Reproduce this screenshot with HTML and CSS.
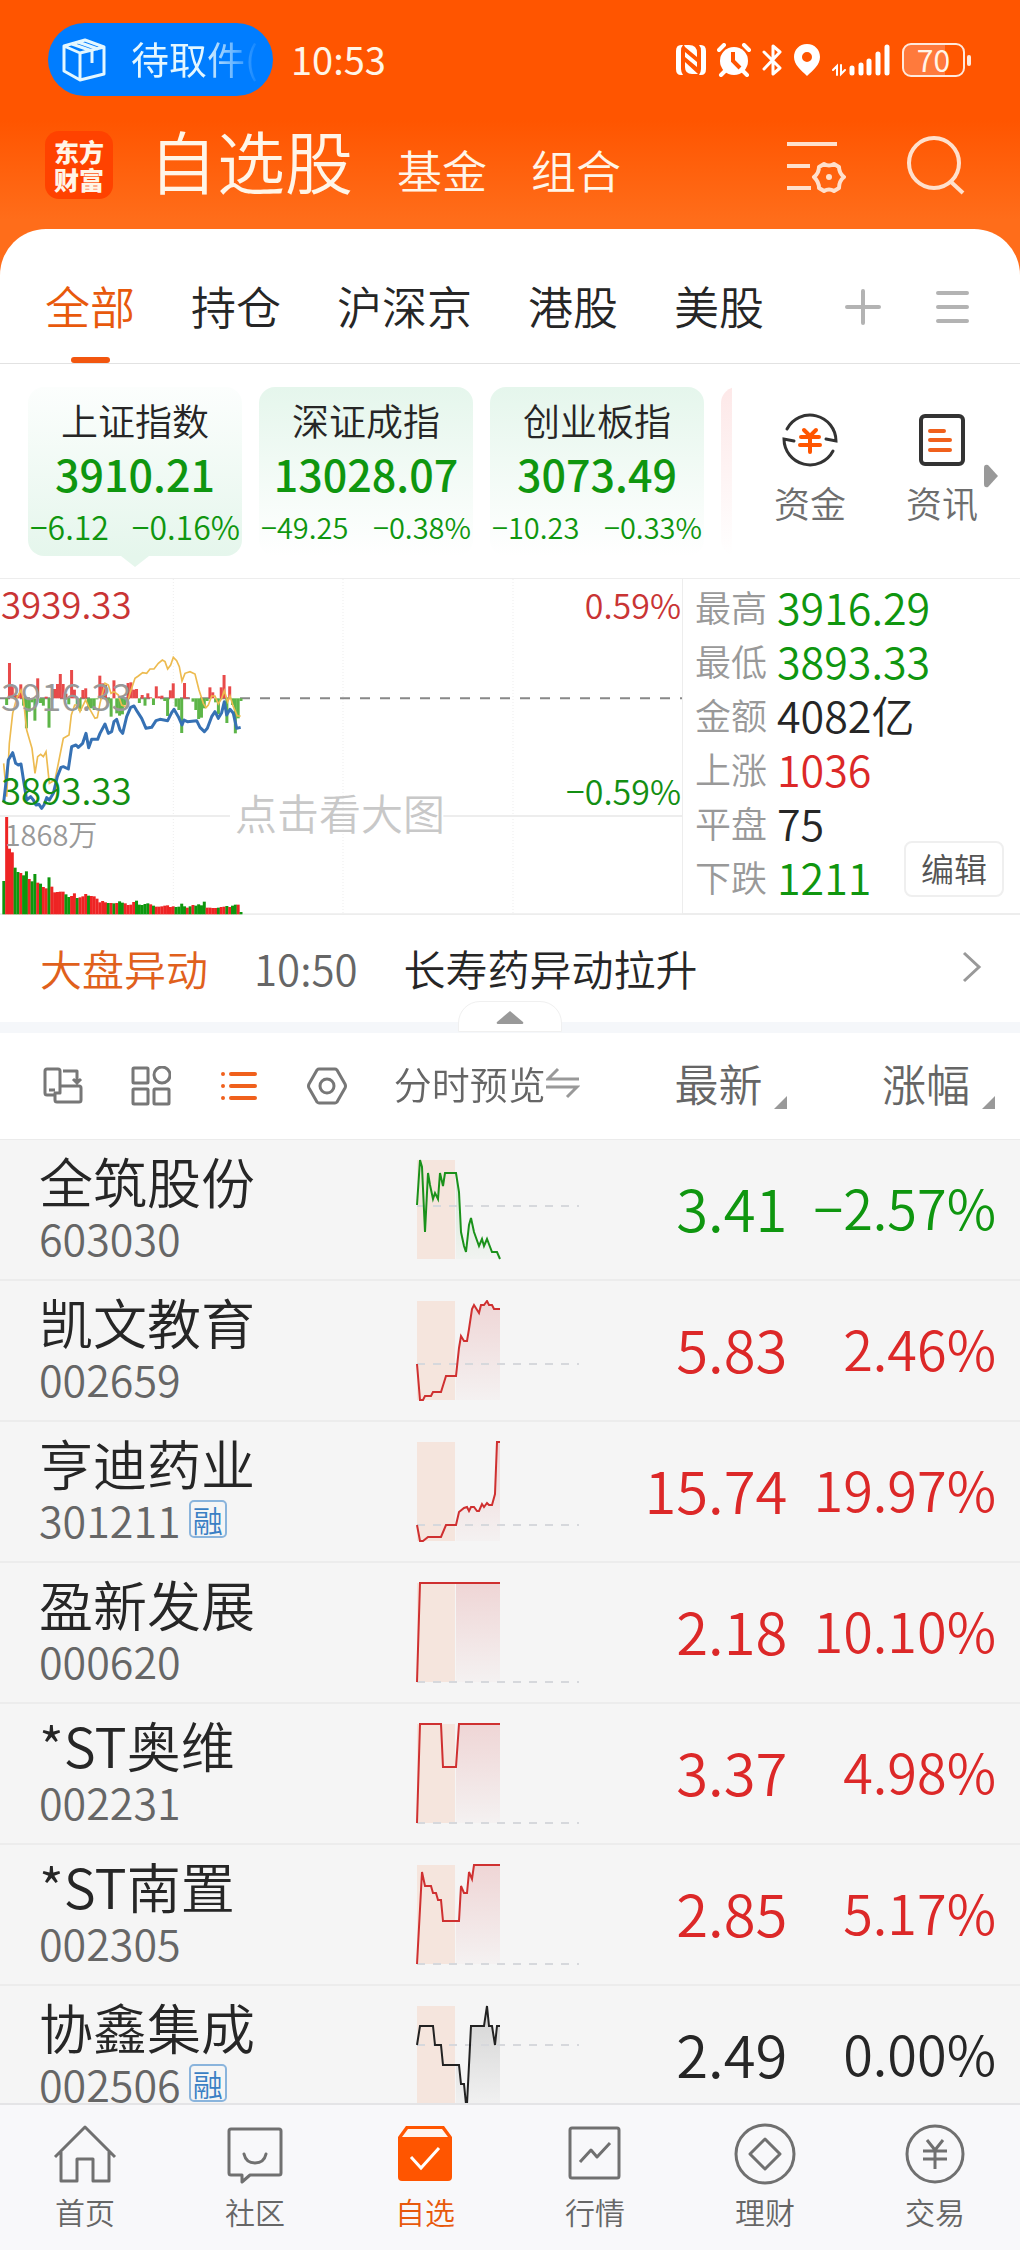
FILE: index.html
```html
<!DOCTYPE html>
<html lang="zh-CN">
<head>
  <meta charset="UTF-8" />
  <meta name="viewport" content="width=device-width, initial-scale=1" />
  <title>自选股</title>
  <link rel="stylesheet" href="styles.css">
</head>
<body>

  <header class="top">
    <div class="status-bar">
      <button class="pill">
        <svg width="44" height="44" viewBox="0 0 44 44" fill="none" stroke="#e4f7ff" stroke-width="3" stroke-linejoin="round">
          <path d="M2 8 L23 2 L42 9 V36 L18 42 L2 33 Z M2 8 L18 15 L42 9 M18 15 V42" />
          <path d="M10 6 L30 13 V25 M16 4 L36 11" />
        </svg>
        <span class="pill-text">待取件(</span>
      </button>
      <span class="clock">10:53</span>
      <div class="status-icons">
        <svg width="30" height="32" viewBox="0 0 30 32" fill="#fff">
          <path d="M7 1 H5 Q0 1 0 7 V25 Q0 31 5 31 H7 Q5 28 5 25 V7 Q5 3 7 1 Z M23 1 H25 Q30 1 30 7 V25 Q30 31 25 31 H23 Q25 28 25 25 V7 Q25 3 23 1 Z" />
          <path d="M8 1 H13 Q21 1 21 9 V13 L9 3 Z M9 8 L21 18 V23 L9 13 Z M9 18 L22 30 H16 Q9 30 9 23 Z" />
        </svg>
        <svg width="34" height="34" viewBox="0 0 34 34">
          <path d="M2 7 L7 2 M32 7 L27 2 M8 28 L4 32 M26 28 L30 32" stroke="#fff" stroke-width="4" stroke-linecap="round" />
          <circle cx="17" cy="18" r="14" fill="#fff" />
          <path d="M16 9 V18 L23 25" fill="none" stroke="#ff5500" stroke-width="4" />
        </svg>
        <svg width="20" height="34" viewBox="0 0 20 34" fill="none" stroke="#fff" stroke-width="3" stroke-linecap="round" stroke-linejoin="round">
          <path d="M2 9 L18 25 L11 31 V3 L18 9 L2 26" />
        </svg>
        <svg width="28" height="34" viewBox="0 0 28 34" fill="#fff" fill-rule="evenodd">
          <path d="M14 1 C22 1 27 7 27 14 C27 22 20 27 14 33 C8 27 1 22 1 14 C1 7 6 1 14 1 Z M14 9 A5 5 0 1 0 14 19 A5 5 0 1 0 14 9 Z" />
        </svg>
        <svg class="signal" width="59" height="34" viewBox="0 0 59 34" fill="none" stroke="#fff" stroke-width="5" stroke-linecap="round">
          <path d="M20 25 V30 M29 22 V30 M37 18 V30 M46 11 V30 M55 4 V30" />
          <path d="M1 27 L5 23 V32 M9 22 V31 L13 27" stroke-width="2" />
        </svg>
        <span class="battery"><span>70</span></span>
      </div>
    </div>
    <div class="title-bar">
      <a class="logo" href="#"><span>东方</span><span>财富</span></a>
      <nav class="sections">
        <h1><a href="#">自选股</a></h1>
        <a href="#">基金</a>
        <a href="#">组合</a>
      </nav>
      <button class="icon-btn" aria-label="筛选设置">
        <svg width="60" height="60" viewBox="0 0 60 60" fill="none" stroke="#ffe0cc" stroke-width="4">
          <path d="M1 9 H51 M1 31 H24 M1 53 H25" />
          <path d="M38 29 Q43 32 48 29 L53 32 Q53 38 58 42 Q53 46 53 53 L48 56 Q43 53 38 56 L33 53 Q33 47 28 42 Q33 38 33 32 Z" stroke-linejoin="round" />
          <circle cx="43" cy="42" r="3" fill="#ffe0cc" stroke="none" />
        </svg>
      </button>
      <button class="icon-btn" aria-label="搜索">
        <svg width="60" height="60" viewBox="0 0 60 60" fill="none" stroke="#ffe0cc" stroke-width="4">
          <circle cx="28" cy="28" r="25" /><path d="M44 46 L57 58" />
        </svg>
      </button>
    </div>
  </header>

  <main class="panel">
    <nav class="tabs">
      <a class="active" href="#">全部</a>
      <a href="#">持仓</a>
      <a href="#">沪深京</a>
      <a href="#">港股</a>
      <a href="#">美股</a>
      <div class="tab-tools">
        <button aria-label="添加"><svg width="36" height="36" viewBox="0 0 36 36" stroke="#b3b3b3" stroke-width="4" stroke-linecap="round"><path d="M2 18 H34 M18 2 V34" /></svg></button>
        <button aria-label="分组管理"><svg width="34" height="36" viewBox="0 0 34 36" stroke="#b3b3b3" stroke-width="4" stroke-linecap="round"><path d="M2 4 H31 M2 18 H31 M2 32 H31" /></svg></button>
      </div>
    </nav>

    <section class="indexes">
      <div class="cards">
        <a class="card selected" href="#">
          <span class="card-name">上证指数</span>
          <strong>3910.21</strong>
          <span class="card-change"><span>−6.12</span><span>−0.16%</span></span>
        </a>
        <a class="card" href="#">
          <span class="card-name">深证成指</span>
          <strong>13028.07</strong>
          <span class="card-change"><span>−49.25</span><span>−0.38%</span></span>
        </a>
        <a class="card" href="#">
          <span class="card-name">创业板指</span>
          <strong>3073.49</strong>
          <span class="card-change"><span>−10.23</span><span>−0.33%</span></span>
        </a>
        <span class="card rise"></span>
      </div>
      <div class="shortcuts">
        <a href="#">
          <svg width="58" height="58" viewBox="0 0 58 58" fill="none" stroke="#333" stroke-width="3" stroke-linecap="round">
            <path d="M6 18 A26 26 0 0 1 55 30 L45 28 M52 40 A26 26 0 0 1 3 28 L13 30" />
            <path d="M23 19 L29 25 L35 19 M20 26 H38 M19 34 H39 M29 26 V41" stroke="#ff5500" stroke-width="4" />
          </svg>
          <span>资金</span>
        </a>
        <a href="#">
          <svg width="58" height="58" viewBox="0 0 58 58" fill="none" stroke="#333" stroke-width="4" stroke-linecap="round">
            <rect x="8" y="5" width="42" height="48" rx="4" />
            <path d="M17 20 H31 M17 29 H37 M17 39 H37" stroke="#f0601c" />
          </svg>
          <span>资讯</span>
        </a>
        <svg class="more" width="14" height="24" viewBox="0 0 14 24" fill="#999"><path d="M0 4 Q0 0 4 1 L14 12 L4 23 Q0 24 0 20 Z" /></svg>
      </div>
    </section>

    <section class="market">
      <svg id="marketChart" class="market-chart" viewBox="0 0 2046 1008" role="img" aria-label="上证指数分时图">
        <g fill="none" stroke="#ededed" stroke-width="6">
          <path d="M0 711 H690 M1330 711 H2046 M0 1006 H2046" />
          <path d="M520 0 V1008 M1029 0 V1008 M1539 0 V1008" stroke-width="3" stroke-dasharray="3 6" />
        </g>
        <path d="M0 358 H2046" stroke="#888" stroke-width="6" stroke-dasharray="30 30" />
        <g id="flowBars"></g>
        <g id="volumeBars"></g>
        <polyline id="avgLine" fill="none" stroke="#edbb50" stroke-width="5" />
        <polyline id="priceLine" fill="none" stroke="#3671b4" stroke-width="9" stroke-linejoin="round" />
        <g class="chart-text">
          <text x="3" y="121" fill="#c93434">3939.33</text>
          <text x="3" y="397" fill="#999">3916.33</text>
          <text x="3" y="678" fill="#138f13">3893.33</text>
          <text class="percent-text" x="2043" y="121" fill="#c93434" text-anchor="end">0.59%</text>
          <text class="percent-text" x="2043" y="678" fill="#138f13" text-anchor="end">−0.59%</text>
          <text class="volume-text" x="14" y="801" fill="#999">1868万</text>
          <text class="hint-text" x="1020" y="754" fill="#c8c8c8" text-anchor="middle">点击看大图</text>
        </g>
      </svg>
      <div class="market-side">
        <dl>
          <div><dt>最高</dt><dd class="down">3916.29</dd></div>
          <div><dt>最低</dt><dd class="down">3893.33</dd></div>
          <div><dt>金额</dt><dd>4082亿</dd></div>
          <div><dt>上涨</dt><dd class="up">1036</dd></div>
          <div><dt>平盘</dt><dd>75</dd></div>
          <div><dt>下跌</dt><dd class="down">1211</dd></div>
        </dl>
        <button class="edit-btn">编辑</button>
      </div>
    </section>

    <section class="news">
      <a href="#">
        <span class="news-tag">大盘异动</span>
        <time>10:50</time>
        <span class="news-title">长寿药异动拉升</span>
        <svg width="20" height="32" viewBox="0 0 20 32" fill="none" stroke="#999" stroke-width="3"><path d="M2 2 L17 16 L2 30" /></svg>
      </a>
      <button class="collapse" aria-label="收起">
        <svg width="28" height="14" viewBox="0 0 28 14" fill="#999"><path d="M14 0 L27 11 Q28 13 26 13 H2 Q0 13 1 11 Z" /></svg>
      </button>
    </section>

    <div class="stock-list">
      <table>
        <thead>
          <tr>
            <th class="col-name">
              <div class="view-tools">
                <button aria-label="横屏"><svg width="40" height="40" viewBox="0 0 40 40" fill="none" stroke="#777" stroke-width="3" stroke-linejoin="round"><path d="M12 29 H4 Q2 29 2 27 V5 Q2 3 4 3 H15 Q17 3 17 5 V27 M6 24 H12 M20 5 H34 V16 M30 13 L34 17 L38 13 M17 20 H36 Q38 20 38 22 V34 Q38 36 36 36 H14 Q12 36 12 34 V27 H17 V20" /></svg></button>
                <button aria-label="宫格"><svg width="40" height="40" viewBox="0 0 40 40" fill="none" stroke="#777" stroke-width="3"><rect x="2" y="2" width="15" height="15" rx="1" /><circle cx="31" cy="9" r="8" /><rect x="2" y="23" width="15" height="15" rx="1" /><rect x="23" y="23" width="15" height="15" rx="1" /></svg></button>
                <button aria-label="列表"><svg width="40" height="40" viewBox="0 0 40 40" stroke="#f0601c" stroke-width="4" stroke-linecap="round"><path d="M4 8 V8 M4 20 V20 M4 32 V32 M12 8 H36 M12 20 H36 M12 32 H36" /></svg></button>
                <button aria-label="设置"><svg width="40" height="40" viewBox="0 0 40 40" fill="none" stroke="#777" stroke-width="3" stroke-linejoin="round"><path d="M12 3 H28 Q29 3 30 4 L38 18 Q39 20 38 22 L30 36 Q29 37 28 37 H12 Q11 37 10 36 L2 22 Q1 20 2 18 L10 4 Q11 3 12 3 Z" /><circle cx="20" cy="20" r="7" /></svg></button>
              </div>
            </th>
            <th class="col-trend"><button>分时预览<svg width="34" height="32" viewBox="0 0 34 32" fill="none" stroke="#999" stroke-width="3"><path d="M12 2 L2 12 H33 M0 20 H31 L21 30" /></svg></button></th>
            <th class="col-price"><button class="sort">最新</button></th>
            <th class="col-change"><button class="sort">涨幅</button></th>
          </tr>
        </thead>
        <tbody>
          <tr>
            <td><b>全筑股份</b><span class="code">603030</span></td>
            <td><svg class="trend" data-color="#1a911a" data-base="46" data-points="0,45 3,0 5,7 8,72 11,13 13,25 16,39 18,33 21,39 23,13 26,26 28,13 39,13 42,32 44,72 47,86 49,92 52,65 54,58 57,72 62,86 65,79 67,86 70,79 75,92 80,92 83,99"></svg></td>
            <td class="down">3.41</td>
            <td class="down">−2.57%</td>
          </tr>
          <tr>
            <td><b>凯文教育</b><span class="code">002659</span></td>
            <td><svg class="trend" data-color="#cf3030" data-base="63" data-points="0,63 3,99 6,99 8,95 14,95 16,91 24,91 29,75 39,75 42,47 44,35 47,40 50,40 52,28 55,8 57,4 62,12 64,4 67,4 70,0 72,4 75,4 77,8 83,8"></svg></td>
            <td class="up">5.83</td>
            <td class="up">2.46%</td>
          </tr>
          <tr>
            <td><b>亨迪药业</b><span class="code">301211<i>融</i></span></td>
            <td><svg class="trend" data-color="#cf3030" data-base="83" data-points="0,83 3,99 6,99 11,95 24,95 29,83 39,83 42,70 47,66 50,65 52,69 54,65 57,65 60,69 62,69 65,62 67,65 70,61 72,63 75,63 78,52 80,0 83,0"></svg></td>
            <td class="up">15.74</td>
            <td class="up">19.97%</td>
          </tr>
          <tr>
            <td><b>盈新发展</b><span class="code">000620</span></td>
            <td><svg class="trend" data-color="#cf3030" data-base="99" data-points="0,99 3,0 83,0"></svg></td>
            <td class="up">2.18</td>
            <td class="up">10.10%</td>
          </tr>
          <tr>
            <td><b>*ST奥维</b><span class="code">002231</span></td>
            <td><svg class="trend" data-color="#cf3030" data-base="99" data-points="0,99 3,0 24,0 26,43 39,43 42,0 83,0"></svg></td>
            <td class="up">3.37</td>
            <td class="up">4.98%</td>
          </tr>
          <tr>
            <td><b>*ST南置</b><span class="code">002305</span></td>
            <td><svg class="trend" data-color="#cf3030" data-base="99" data-points="0,99 5,7 8,21 14,21 16,28 19,28 21,35 24,35 26,56 42,56 44,21 47,28 50,28 52,7 55,14 57,0 83,0"></svg></td>
            <td class="up">2.85</td>
            <td class="up">5.17%</td>
          </tr>
          <tr>
            <td><b>协鑫集成</b><span class="code">002506<i>融</i></span></td>
            <td><svg class="trend" data-color="#222222" data-base="39" data-points="0,39 3,20 16,20 18,39 24,39 26,59 42,59 44,78 47,78 49,98 50,98 54,20 67,20 70,0 72,20 75,20 78,39 80,20 83,20"></svg></td>
            <td>2.49</td>
            <td>0.00%</td>
          </tr>
        </tbody>
      </table>
    </div>
  </main>

  <nav class="bottom-nav">
    <a href="#">
      <svg width="64" height="64" viewBox="0 0 64 64" fill="none" stroke="#707070" stroke-width="3" stroke-linejoin="round"><path d="M2 35 L32 5 L62 35 M8 30 V59 H24 V37 H40 V59 H56 V30" /></svg>
      <span>首页</span>
    </a>
    <a href="#">
      <svg width="64" height="64" viewBox="0 0 64 64" fill="none" stroke="#707070" stroke-width="3" stroke-linejoin="round" stroke-linecap="round"><path d="M8 7 H56 Q58 7 58 9 V51 Q58 53 56 53 H27 L19 60 V53 H8 Q6 53 6 51 V9 Q6 7 8 7 Z M21 32 Q23 41 32 41 Q41 41 43 32" /></svg>
      <span>社区</span>
    </a>
    <a class="active" href="#">
      <svg width="64" height="64" viewBox="0 0 64 64" fill="#ff5500"><path d="M13 4 H51 L59 15 V55 Q59 59 55 59 H9 Q5 59 5 55 V15 Z" /><path d="M15 7 H49 L55 15 H9 Z" fill="#fff4ec" /><path d="M18 35 L28 46 L46 26" fill="none" stroke="#fff" stroke-width="3" /></svg>
      <span>自选</span>
    </a>
    <a href="#">
      <svg width="64" height="64" viewBox="0 0 64 64" fill="none" stroke="#707070" stroke-width="3" stroke-linejoin="round"><rect x="7" y="6" width="49" height="50" rx="2" /><path d="M17 40 L28 28 L34 35 L47 21" /></svg>
      <span>行情</span>
    </a>
    <a href="#">
      <svg width="64" height="64" viewBox="0 0 64 64" fill="none" stroke="#707070" stroke-width="3" stroke-linejoin="round"><circle cx="32" cy="32" r="29" /><path d="M32 17 L47 32 L32 47 L17 32 Z" /></svg>
      <span>理财</span>
    </a>
    <a href="#">
      <svg width="64" height="64" viewBox="0 0 64 64" fill="none" stroke="#707070" stroke-width="3"><circle cx="32" cy="32" r="28" /><path d="M24 18 L32 28 L40 18 M20 29 H44 M20 37 H44 M32 28 V47" /></svg>
      <span>交易</span>
    </a>
  </nav>

  <script src="charts.js"></script>
</body>
</html>
```

FILE: styles.css
```css
* {
  box-sizing: border-box;
}

body {
  margin: 0;
  height: 100vh;
  display: flex;
  flex-direction: column;
  font-family: "Noto Sans CJK SC", sans-serif;
  font-weight: 350;
  color: #262626;
  background: #ff6d1a;
}

a {
  color: inherit;
  text-decoration: none;
}

button {
  font: inherit;
  color: inherit;
  background: none;
  border: none;
  padding: 0;
  cursor: pointer;
}

svg {
  display: block;
  flex: none;
}

.up {
  color: #dc2828;
}

.down {
  color: #0f960f;
}

/* Header */
.top {
  color: #fff5e8;
  background: linear-gradient(#ff5500 120px, #ff6d1a 220px);
  padding-bottom: 25px;
}

.status-bar {
  display: flex;
  align-items: center;
  padding: 23px 50px 0 48px;
}

.pill {
  display: flex;
  align-items: center;
  gap: 25px;
  width: 225px;
  height: 73px;
  padding-left: 14px;
  border-radius: 37px;
  background: #007dff;
  overflow: hidden;
}

.pill-text {
  width: 130px;
  padding-bottom: 4px;
  font-size: 38px;
  font-weight: 400;
  line-height: 48px;
  white-space: nowrap;
  overflow: hidden;
  text-align: left;
  color: transparent;
  background: linear-gradient(90deg, #e4f7ff 55%, #007dff 100%);
  background-clip: text;
  -webkit-background-clip: text;
}

.clock {
  margin-left: 18px;
  padding-bottom: 3px;
  font-size: 38px;
  font-weight: 400;
}

.status-icons {
  display: flex;
  align-items: center;
  gap: 11px;
  margin-left: auto;
}

.battery {
  position: relative;
  width: 63px;
  height: 34px;
  margin-right: 5px;
  border: 2px solid #ffe9dc;
  border-radius: 9px;
  background: linear-gradient(90deg, #ff7a3c 70%, transparent 70%);
  font-size: 30px;
  font-weight: 400;
  line-height: 28px;
  text-align: center;
}

.battery::after {
  content: "";
  position: absolute;
  right: -8px;
  top: 10px;
  width: 4px;
  height: 11px;
  border-radius: 2px;
  background: #ffe9dc;
}

.title-bar {
  display: flex;
  align-items: center;
  height: 108px;
  padding: 30px 54px 0 45px;
}

.logo {
  display: flex;
  flex-direction: column;
  align-items: center;
  justify-content: center;
  width: 68px;
  height: 68px;
  border-radius: 14px;
  background: #ff4200;
  font-size: 25px;
  font-weight: 900;
  line-height: 28px;
}

.sections {
  display: flex;
  align-items: baseline;
  gap: 44px;
  flex: 1;
  margin-left: 36px;
  font-size: 45px;
  line-height: 80px;
}

.sections h1 {
  margin: 0;
  font-size: 68px;
  font-weight: inherit;
}

.icon-btn {
  margin-left: 60px;
}

/* White panel */
.panel {
  flex: 1;
  min-height: 0;
  display: flex;
  flex-direction: column;
  background: #fff;
  border-radius: 46px 46px 0 0;
}

.tabs {
  display: flex;
  align-items: center;
  gap: 56px;
  height: 135px;
  padding: 0 50px 0 45px;
  border-bottom: 1px solid #e2e2e2;
  font-size: 45px;
}

.tabs a {
  position: relative;
  height: 134px;
  padding-top: 20px;
  line-height: 114px;
}

.tabs .active {
  color: #e8590c;
}

.tabs .active::after {
  content: "";
  position: absolute;
  left: 50%;
  bottom: 0;
  width: 39px;
  height: 6px;
  margin-left: -19px;
  border-radius: 3px;
  background: #f2560f;
}

.tab-tools {
  display: flex;
  align-items: center;
  gap: 55px;
  margin-left: auto;
  padding-top: 22px;
}

/* Index cards */
.indexes {
  display: flex;
  justify-content: space-between;
}

.cards {
  display: flex;
  gap: 17px;
  flex: 1;
  padding: 23px 0 22px 28px;
  overflow: hidden;
}

.card {
  position: relative;
  flex: none;
  display: flex;
  flex-direction: column;
  align-items: center;
  width: 214px;
  height: 169px;
  padding: 8px 0;
  border-radius: 16px;
  background: linear-gradient(#e5f6ec, #fff);
}

.card.selected {
  background: linear-gradient(#fcfefd, #e5f6ec);
}

.card.selected::after {
  content: "";
  position: absolute;
  top: 100%;
  left: 50%;
  margin-left: -14px;
  border: 14px solid transparent;
  border-top: 11px solid #e5f6ec;
  border-bottom: 0;
}

.card.rise {
  background: linear-gradient(#fde8e8, #fff);
}

.card-name {
  font-size: 37px;
  line-height: 50px;
}

.card strong {
  font-size: 43px;
  font-weight: 500;
  line-height: 56px;
  color: #0f960f;
}

.card-change {
  display: flex;
  justify-content: space-between;
  width: 100%;
  padding: 0 2px;
  font-size: 29px;
  line-height: 50px;
  color: #0f960f;
}

.selected .card-change {
  font-size: 32px;
}

.shortcuts {
  position: relative;
  display: flex;
  gap: 60px;
  width: 288px;
  padding: 47px 38px 0 42px;
  font-size: 36px;
  line-height: 50px;
  color: #6e6e6e;
}

.shortcuts a {
  display: flex;
  flex-direction: column;
  align-items: center;
  gap: 8px;
  white-space: nowrap;
}

.more {
  position: absolute;
  right: 22px;
  top: 100px;
}

/* Market chart */
.market {
  display: grid;
  grid-template-columns: 682fr 338fr;
  border-top: 1px solid #ededed;
}

.market-chart {
  width: 100%;
}

.chart-text {
  font-size: 110px;
}

.percent-text {
  font-size: 102px;
}

.volume-text {
  font-size: 87px;
}

.hint-text {
  font-size: 126px;
}

.market-side {
  position: relative;
  padding: 0 12px;
  border-left: 1px solid #ededed;
  border-bottom: 2px solid #ededed;
}

.market-side dl {
  margin: 0;
}

.market-side dl div {
  display: flex;
  align-items: center;
  gap: 10px;
  height: 54px;
}

.market-side dt {
  font-size: 36px;
  color: #999;
}

.market-side dd {
  margin: 0;
  font-size: 43px;
  line-height: 54px;
}

.edit-btn {
  position: absolute;
  right: 16px;
  bottom: 16px;
  padding: 0 15px 2px;
  border: 2px solid #efefef;
  border-radius: 8px;
  background: #fff;
  font-size: 33px;
  line-height: 50px;
  color: #555;
}

/* News line */
.news {
  position: relative;
  border-bottom: 11px solid #f5f7fa;
}

.news a {
  display: flex;
  align-items: center;
  height: 107px;
  padding: 0 38px 3px 40px;
  font-size: 42px;
}

.news-tag {
  color: #e0601c;
}

.news time {
  margin: 0 46px;
  color: #666;
}

.news-title {
  flex: 1;
}

.collapse {
  position: absolute;
  left: 50%;
  bottom: -10px;
  display: flex;
  align-items: center;
  justify-content: center;
  width: 104px;
  height: 31px;
  margin-left: -52px;
  padding-top: 3px;
  border: 1px solid #f0f0f0;
  border-radius: 22px 22px 0 0;
  background: #fff;
}

/* Stock table */
.stock-list {
  flex: 1;
  min-height: 0;
  overflow-y: auto;
  scrollbar-width: none;
  background: #f5f5f5;
}

.stock-list table {
  width: 100%;
  table-layout: fixed;
  border-collapse: separate;
  border-spacing: 0;
}

.stock-list th {
  position: sticky;
  top: 0;
  height: 107px;
  padding: 0 0 6px;
  border-bottom: 1px solid #ebebeb;
  background: #fff;
  font-size: 44px;
  font-weight: inherit;
  line-height: 64px;
  text-align: right;
  color: #666;
}

.col-name {
  width: 38.6%;
}

.col-trend {
  width: 21.4%;
}

.col-price {
  width: 17.2%;
}

.col-change {
  width: 22.8%;
}

.view-tools {
  display: flex;
  gap: 48px;
  padding: 6px 0 0 43px;
}

.stock-list .col-trend button {
  display: flex;
  align-items: center;
  font-size: 38px;
  white-space: nowrap;
}

/* small corner mark of a sortable column */
.sort {
  position: relative;
  padding-right: 25px;
}

.sort::after {
  content: "";
  position: absolute;
  right: 0;
  bottom: 6px;
  border-left: 13px solid transparent;
  border-bottom: 13px solid #999;
}

.col-change .sort {
  margin-right: 25px;
}

.stock-list td {
  height: 141px;
  padding: 0 0 6px;
  border-bottom: 2px solid #ececec;
  font-size: 58px;
  text-align: right;
  white-space: nowrap;
}

.stock-list td:first-child {
  padding-left: 39px;
  text-align: left;
}

.stock-list td:last-child {
  padding-right: 24px;
  font-size: 54px;
}

.stock-list td b {
  display: block;
  font-size: 54px;
  font-weight: inherit;
  line-height: 60px;
}

.code {
  display: flex;
  align-items: center;
  gap: 8px;
  font-size: 43px;
  line-height: 52px;
  color: #666;
}

.code i {
  padding: 0 2px;
  border: 2px solid #8ab4dc;
  border-radius: 5px;
  font-size: 30px;
  font-style: normal;
  line-height: 34px;
  color: #3a7fc4;
}

.trend {
  width: 164px;
  height: 101px;
  margin: 5px 0 0 22px;
}

/* Bottom navigation */
.bottom-nav {
  display: grid;
  grid-template-columns: repeat(6, 1fr);
  height: 147px;
  padding-top: 17px;
  border-top: 2px solid #e4e4e6;
  background: #f8f8fa;
  font-size: 30px;
  line-height: 44px;
  color: #666;
}

.bottom-nav a {
  display: flex;
  flex-direction: column;
  align-items: center;
  gap: 3px;
}

.bottom-nav .active {
  color: #e8590c;
}
```

FILE: charts.js
```js
const SVG_NS = 'http://www.w3.org/2000/svg';

// net flow per bar: above zero is drawn up in red, below zero down in green
const flow = [
  0, -20, 106, 38, 10, 10, 42, -22, -90, -40, -12, -67, 60, -14, -22, 5, -88, -3, 28, 43,
  73, 43, 14, -18, 85, 26, -24, -38, 25, 30, -30, -30, -35, -3, 68, 45, 40, -15, -55, 54,
  -45, -52, -48, -20, 46, 48, 26, 28, -14, 10, -22, 15, 3, -20, 36, 6, 8, -8, -53, 24,
  45, -25, -35, -104, 46, 3, 0, -10, -35, -62, -58, -30, -8, 33, 18, -12, -48, 33, 70, -74,
  36, -20, -105, -60, -8
];

// volume per bar, negative marks a falling minute
const volume = [
  -100, 292, 197, 186, -140, -127, 124, -117, -129, 106, -99, -121, 95, -92, 82, 78, -111, 83, 66, 67,
  68, 68, -60, -52, 55, 63, -49, 51, 54, 61, -56, 55, 54, 47, 36, 40, 36, -34, 34, -33,
  34, -39, -35, 33, 28, 29, 37, -41, -29, -28, -31, -33, 30, -26, 23, 23, 24, 26, 27, 22,
  24, -22, -23, -32, -24, 20, -24, 28, -26, -30, -27, -38, 20, 20, 19, 19, -20, 22, 23, -25,
  22, -26, -29, 29, -7
];

const avg = '11,553 20,653 28,493 38,403 50,358 63,333 70,358 80,453 96,508 105,583 113,533 122,526 130,533 138,518 148,613 165,603 175,553 190,478 207,468 214,408 224,378 232,378 240,398 257,363 268,388 285,418 292,416 300,373 315,313 325,318 333,343 342,338 355,348 365,378 378,383 390,343 405,298 415,291 428,281 440,283 450,270 462,270 475,253 487,243 495,248 503,270 512,258 520,235 530,245 538,263 546,306 555,283 570,278 585,285 597,333 610,373 618,386 625,378 635,351 645,351 655,375 665,358 673,335 683,368 690,351 700,383 712,411 722,411';
const price = '11,670 20,593 25,543 38,521 47,553 55,558 63,555 72,613 80,663 92,653 100,663 108,678 117,676 125,688 132,678 140,656 148,663 160,643 172,593 183,565 190,563 205,570 215,503 228,498 235,505 248,493 258,463 266,506 275,481 293,481 300,463 315,435 325,463 335,458 342,428 350,421 360,453 368,463 380,413 392,385 402,381 412,398 425,418 438,448 455,445 468,425 480,421 503,425 515,401 522,391 535,413 546,438 552,423 562,428 590,425 600,445 613,458 622,448 635,413 645,398 655,418 665,401 673,368 680,408 690,391 700,403 710,448 722,445';

function add(parent, name, attrs) {
  const el = document.createElementNS(SVG_NS, name);
  for (const key in attrs) el.setAttribute(key, attrs[key]);
  parent.appendChild(el);
  return el;
}

function drawMarket() {
  const flowGroup = document.getElementById('flowBars');
  const volumeGroup = document.getElementById('volumeBars');
  const step = 8.47;

  flow.forEach((v, i) => {
    add(flowGroup, 'rect', {
      x: 7 + i * step, y: v > 0 ? 358 - v : 358,
      width: 9, height: Math.abs(v),
      fill: v > 0 ? '#e84a4a' : '#5db548'
    });
  });
  volume.forEach((v, i) => {
    add(volumeGroup, 'rect', {
      x: 7 + i * step, y: 1006 - Math.abs(v),
      width: 9, height: Math.abs(v),
      fill: v > 0 ? '#ee2424' : '#0d960d'
    });
  });
  document.getElementById('avgLine').setAttribute('points', avg);
  document.getElementById('priceLine').setAttribute('points', price);
}

function drawTrend(svg, index) {
  const { color, base, points } = svg.dataset;
  svg.setAttribute('viewBox', '-1 -1 164 101');

  const defs = add(svg, 'defs', {});
  const grad = add(defs, 'linearGradient', { id: 'fade' + index, x1: 0, y1: 0, x2: 0, y2: 1 });
  add(grad, 'stop', { offset: 0, 'stop-color': color, 'stop-opacity': 0.16 });
  add(grad, 'stop', { offset: 1, 'stop-color': color, 'stop-opacity': 0.02 });
  const clip = add(defs, 'clipPath', { id: 'half' + index });
  add(clip, 'rect', { x: 39, y: -1, width: 44, height: 101 });

  add(svg, 'polygon', {
    points: points + ' 83,99 0,99',
    fill: 'url(#fade' + index + ')', 'clip-path': 'url(#half' + index + ')'
  });
  add(svg, 'rect', { x: 0, y: 0, width: 38, height: 99, fill: '#f5e5dd' });
  add(svg, 'path', { d: 'M0 ' + base + ' H162', stroke: '#d6d8dc', 'stroke-width': 2, 'stroke-dasharray': '8 8' });
  add(svg, 'polyline', { points: points, fill: 'none', stroke: color, 'stroke-width': 2 });
}

drawMarket();
document.querySelectorAll('.trend').forEach(drawTrend);
```
